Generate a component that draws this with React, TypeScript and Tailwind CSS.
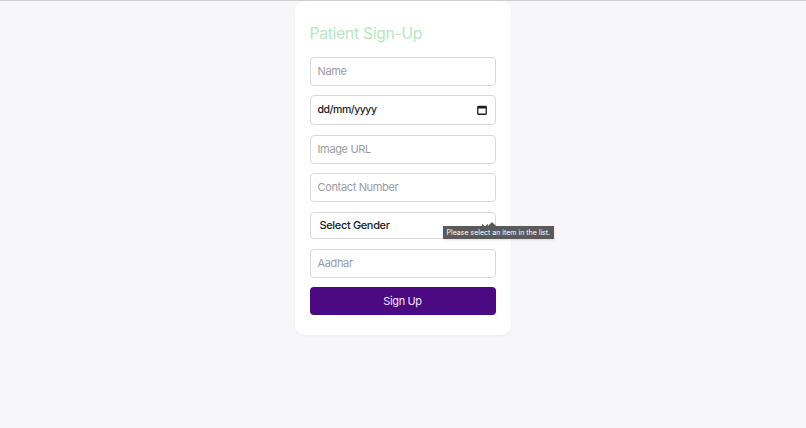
import React from 'react';

const fieldBase =
  'w-full h-[29px] rounded-[4px] border border-[#d9d9dc] bg-white px-[7px] text-[11px] tracking-[-0.35px] text-[#9b9ba3] flex items-center';

function Field({ label, className = '' }: { label: string; className?: string }) {
  return <div className={`${fieldBase} ${className}`}>{label}</div>;
}

export default function App() {
  return (
    <div
      className="min-h-[428px] w-full bg-[#f7f7f9] border-t border-[#cfcfd3]"
      style={{ fontFamily: 'Inter, "Noto Sans", sans-serif' }}
    >
      <div className="flex justify-center">
        <div className="ml-[-1px] w-[216px] rounded-[10px] bg-white px-[15px] pt-[19px] pb-[20px] shadow-[0_1px_3px_rgba(0,0,0,0.04)]">
          <h1 className="text-[15.5px] leading-[28px] tracking-[-0.2px] font-normal text-[#b5e8bd]">
            Patient Sign-Up
          </h1>

          <div className="mt-[9px] flex flex-col">
            <Field label="Name" />

            {/* date input */}
            <div className="mt-[9px] w-full h-[30px] rounded-[4px] border border-[#d9d9dc] bg-white pl-[7px] pr-[8px] flex items-center justify-between text-[10.5px] tracking-[-0.45px] font-medium text-[#1a1a1a]">
              <span>dd/mm/yyyy</span>
              <svg width="10" height="10" viewBox="0 0 10 10" fill="none">
                <rect x="0.75" y="1.5" width="8.5" height="7.75" rx="0.8" stroke="#1f1f1f" strokeWidth="1.3" />
                <rect x="0.75" y="1.5" width="8.5" height="2" fill="#1f1f1f" />
              </svg>
            </div>

            <Field label="Image URL" className="mt-[10px]" />
            <Field label="Contact Number" className="mt-[9px]" />

            {/* select */}
            <div className="relative mt-[10px]">
              <div className="w-full h-[27px] rounded-[4px] border border-[#d9d9dc] bg-white pl-[9px] pr-[6px] flex items-center justify-between text-[11px] tracking-[-0.35px] font-medium text-[#1a1a1a]">
                <span>Select Gender</span>
                <svg width="8" height="6" viewBox="0 0 8 6" fill="none">
                  <path d="M1 1.5 L4 4.5 L7 1.5" stroke="#555" strokeWidth="1.2" />
                </svg>
              </div>
              <div className="absolute left-[133px] top-[10px] z-10">
                <div className="ml-[45px] h-0 w-0 border-x-[4px] border-b-[4px] border-x-transparent border-b-[#5a5a5a]" />
                <div className="whitespace-nowrap bg-[#5a5a5a] px-[4px] text-[7px] leading-[13px] text-white shadow-sm">
                  Please select an item in the list.
                </div>
              </div>
            </div>

            <Field label="Aadhar" className="mt-[10px]" />

            <button className="mt-[9px] w-full h-[28px] rounded-[4px] bg-[#4b0a82] text-[11px] tracking-[-0.35px] text-[#f3e8ff]">
              Sign Up
            </button>
          </div>
        </div>
      </div>
    </div>
  );
}
